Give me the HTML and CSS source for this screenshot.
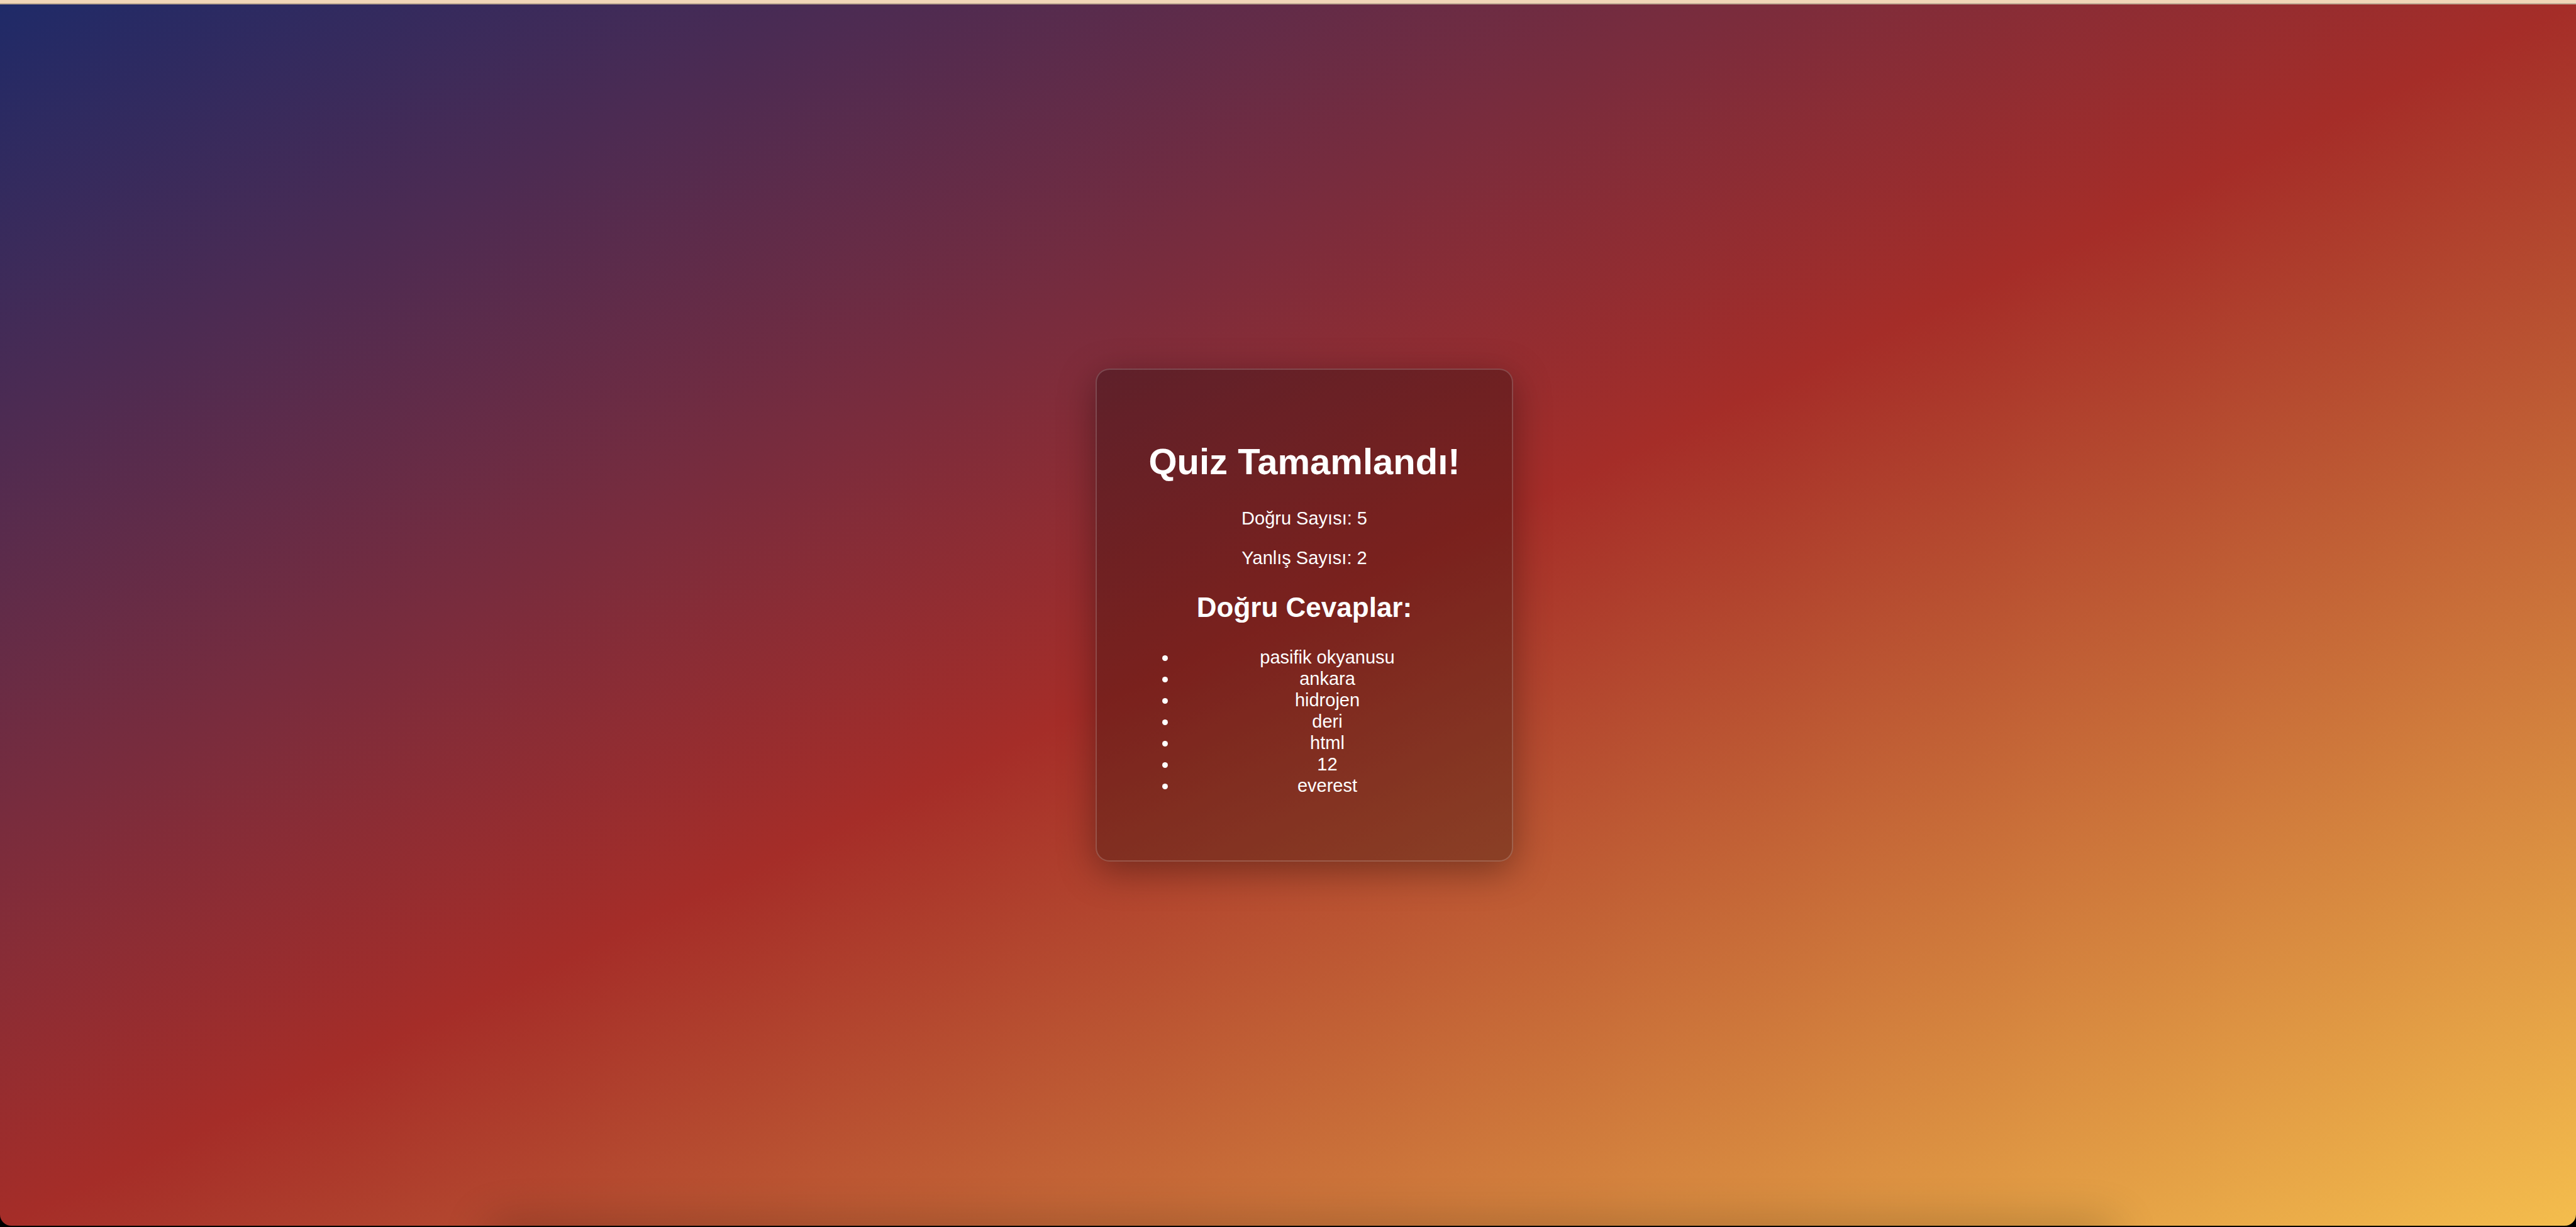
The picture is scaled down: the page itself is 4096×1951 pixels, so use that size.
FILE: index.html
```html
<!DOCTYPE html>
<html lang="tr">
<head>
<meta charset="utf-8">
<title>Quiz</title>
<link rel="stylesheet" href="styles.css">
</head>
<body>
<div class="toolbar"></div>
<main class="stage">
  <section class="card">
    <h1 class="title">Quiz Tamamlandı!</h1>
    <p class="score">Doğru Sayısı: 5</p>
    <p class="score">Yanlış Sayısı: 2</p>
    <h2 class="subtitle">Doğru Cevaplar:</h2>
    <ul class="answers">
      <li>pasifik okyanusu</li>
      <li>ankara</li>
      <li>hidrojen</li>
      <li>deri</li>
      <li>html</li>
      <li>12</li>
      <li>everest</li>
    </ul>
  </section>
</main>
</body>
</html>
```
FILE: styles.css
```css
* {
  box-sizing: border-box;
}

body {
  margin: 0;
  min-height: 100vh;
  padding-bottom: 2px;
  display: flex;
  flex-direction: column;
  background: #000;
  color: #fff;
  font: 29px/34px "Liberation Sans", Arial, sans-serif;
}

.toolbar {
  height: 7px;
  background: #f1d6b8;
  border-bottom: 2px solid #c0ab93;
}

.stage {
  position: relative;
  flex: 1;
  display: flex;
  align-items: center;
  justify-content: center;
  padding-left: 52px;
  overflow: hidden;
  border-radius: 0 0 18px 18px;
  background: linear-gradient(to bottom right, #1f2a68, #a52d28, #f4bd4d);
}

/* soft shade rising from the lower edge */
.stage::after {
  content: "";
  position: absolute;
  left: 19%;
  right: 18%;
  top: 100%;
  height: 40px;
  box-shadow: 0 0 72px rgba(0, 0, 0, 0.3);
}

.card {
  width: 664px;
  max-width: 100%;
  padding: 73px;
  text-align: center;
  border: 2px solid rgba(255, 255, 255, 0.18);
  border-radius: 22px;
  background: rgba(0, 0, 0, 0.26);
  box-shadow: 0 15px 58px rgba(0, 0, 0, 0.35);
}

.title {
  margin: 40px 0;
  font-size: 58px;
  line-height: 66px;
  white-space: nowrap;
}

.score {
  margin: 29px 0;
}

.subtitle {
  margin: 37px 0;
  font-size: 44px;
  line-height: 50px;
}

.answers {
  margin: 29px 0;
  padding-left: 55px;
}

.answers li {
  padding-left: 18px;
}
```
